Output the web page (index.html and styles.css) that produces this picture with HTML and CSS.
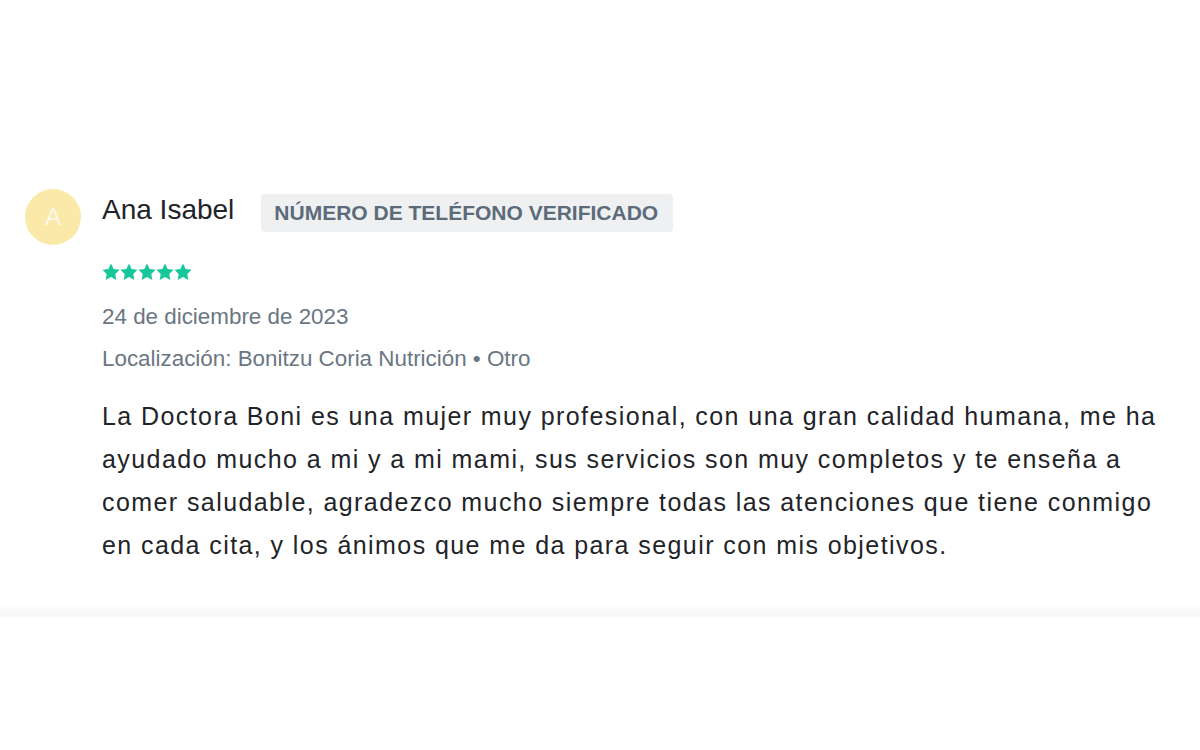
FILE: index.html
```html
<!DOCTYPE html>
<html lang="es">
<head>
<meta charset="utf-8">
<title>Opinión</title>
<link rel="stylesheet" href="styles.css">
</head>
<body>
<div class="page">
  <article class="review">
    <div class="avatar">A</div>
    <div class="content">
      <div class="head">
        <span class="name">Ana Isabel</span>
        <span class="badge">NÚMERO DE TELÉFONO VERIFICADO</span>
      </div>
      <div class="stars">
        <svg viewBox="0 0 24 24"><path d="M12 .8l3.5 7.2 7.9 1.1-5.7 5.6 1.4 7.9L12 18.8l-7.1 3.8 1.4-7.9L.6 9.1 8.5 8z"/></svg>
        <svg viewBox="0 0 24 24"><path d="M12 .8l3.5 7.2 7.9 1.1-5.7 5.6 1.4 7.9L12 18.8l-7.1 3.8 1.4-7.9L.6 9.1 8.5 8z"/></svg>
        <svg viewBox="0 0 24 24"><path d="M12 .8l3.5 7.2 7.9 1.1-5.7 5.6 1.4 7.9L12 18.8l-7.1 3.8 1.4-7.9L.6 9.1 8.5 8z"/></svg>
        <svg viewBox="0 0 24 24"><path d="M12 .8l3.5 7.2 7.9 1.1-5.7 5.6 1.4 7.9L12 18.8l-7.1 3.8 1.4-7.9L.6 9.1 8.5 8z"/></svg>
        <svg viewBox="0 0 24 24"><path d="M12 .8l3.5 7.2 7.9 1.1-5.7 5.6 1.4 7.9L12 18.8l-7.1 3.8 1.4-7.9L.6 9.1 8.5 8z"/></svg>
      </div>
      <div class="date">24 de diciembre de 2023</div>
      <div class="location">Localización: Bonitzu Coria Nutrición • Otro</div>
      <p class="text">La Doctora Boni es una mujer muy profesional, con una gran calidad humana, me ha ayudado mucho a mi y a mi mami, sus servicios son muy completos y te enseña a comer saludable, agradezco mucho siempre todas las atenciones que tiene conmigo en cada cita, y los ánimos que me da para seguir con mis objetivos.</p>
    </div>
  </article>
  <div class="divider"></div>
</div>
</body>
</html>
```

FILE: styles.css
```css
html, body {
  margin: 0;
  padding: 0;
  background: #ffffff;
}

body {
  font-family: "Liberation Sans", Arial, sans-serif;
  color: #1f2429;
}

.page {
  width: 1200px;
  height: 750px;
  overflow: hidden;
}

.review {
  display: flex;
  align-items: flex-start;
  gap: 21px;
  padding: 189px 0 37px 25px;
}

.avatar {
  flex: none;
  width: 56px;
  height: 56px;
  border-radius: 50%;
  background: #fbe9a9;
  color: #fdf8e8;
  font-size: 24px;
  display: flex;
  align-items: center;
  justify-content: center;
}

.content {
  padding-top: 5px;
}

.head {
  display: flex;
  align-items: center;
  gap: 27px;
  height: 38px;
}

.name {
  font-size: 28px;
  color: #1f2429;
  position: relative;
  top: -3px;
}

.badge {
  background: #eef0f2;
  color: #5c6b79;
  font-weight: bold;
  font-size: 21px;
  height: 38px;
  line-height: 38px;
  padding: 0 15px 0 13px;
  border-radius: 4px;
}

.stars {
  display: flex;
  gap: 0;
  margin-top: 31px;
  height: 18px;
}

.stars svg {
  width: 18px;
  height: 18px;
  fill: #17c79b;
}

.date {
  font-size: 22.4px;
  color: #6a7682;
  margin-top: 23px;
  line-height: 26px;
}

.location {
  font-size: 22.4px;
  color: #6a7682;
  margin-top: 16px;
  line-height: 26px;
}

.text {
  margin: 23px 0 0;
  width: 1080px;
  font-size: 25px;
  letter-spacing: 1.42px;
  line-height: 43px;
  color: #1f2429;
}

.divider {
  height: 12px;
  background: linear-gradient(to bottom, #ffffff, #f5f6f7);
  border-bottom: 1px solid #f8f9fa;
}
```
